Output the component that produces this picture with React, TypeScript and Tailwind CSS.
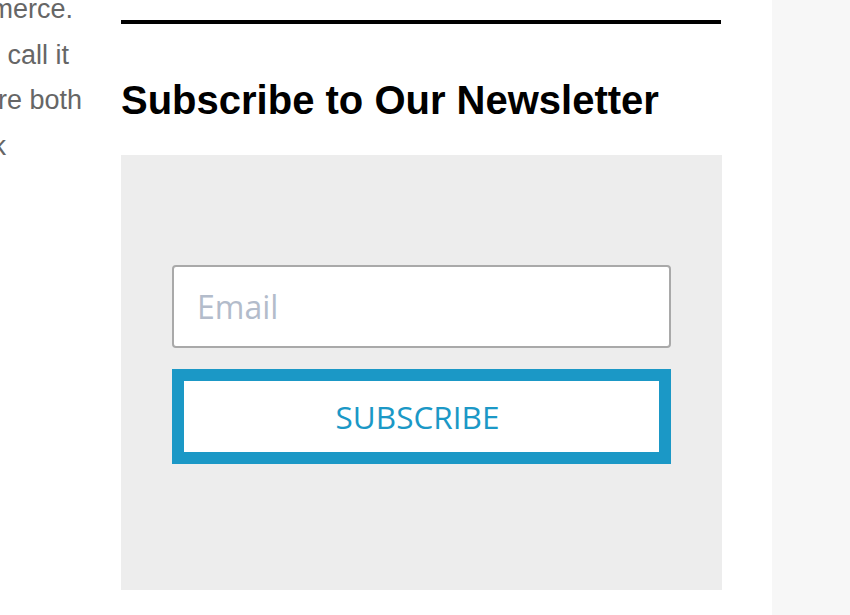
const leftLines = [
  { text: 'with e-commerce.', pad: 'pr-[48px]' },
  { text: 'People call it', pad: 'pr-[52px]' },
  { text: 'We are both', pad: 'pr-[39px]' },
  { text: 'work', pad: 'pr-[115px]' }
];

export default function App() {
  return (
    <div className="flex h-[615px] w-[850px] overflow-hidden bg-white font-['Liberation_Sans',Arial,sans-serif]">
      {/* article text, cut off by the viewport */}
      <div className="w-[121px] shrink-0 overflow-hidden">
        <div className="-mt-[13px] text-[27px] leading-[45.5px] text-[#666666]">
          {leftLines.map((line) => (
            <div key={line.text} className={`flex justify-end ${line.pad}`}>
              <span className="whitespace-nowrap">{line.text}</span>
            </div>
          ))}
        </div>
      </div>

      <main className="w-[601px] shrink-0">
        <div className="mt-[20px] h-[4px] w-[600px] bg-black" />
        <h2 className="mt-[53px] text-[40px] font-bold leading-[46px] text-black">
          Subscribe to Our Newsletter
        </h2>
        <form className="mt-[32px] flex h-[435px] flex-col bg-[#ededed] px-[51px] pt-[110px]">
          <input
            type="email"
            placeholder="Email"
            className="h-[83px] w-full rounded-[4px] border-2 border-[#a9a9a9] bg-white pl-[23px] font-['Open_Sans',sans-serif] text-[32px] text-[#333] outline-none placeholder:text-[#b3bccb]"
          />
          <button
            type="button"
            className="mt-[21px] h-[95px] w-full border-[12px] border-[#1b98c6] bg-white pr-[8px] font-['Open_Sans',sans-serif] text-[31.5px] text-[#1b98c6]"
          >
            SUBSCRIBE
          </button>
        </form>
      </main>

      <div className="w-[50px] shrink-0" />
      <aside className="flex-1 bg-[#f7f7f7]" />
    </div>
  );
}
